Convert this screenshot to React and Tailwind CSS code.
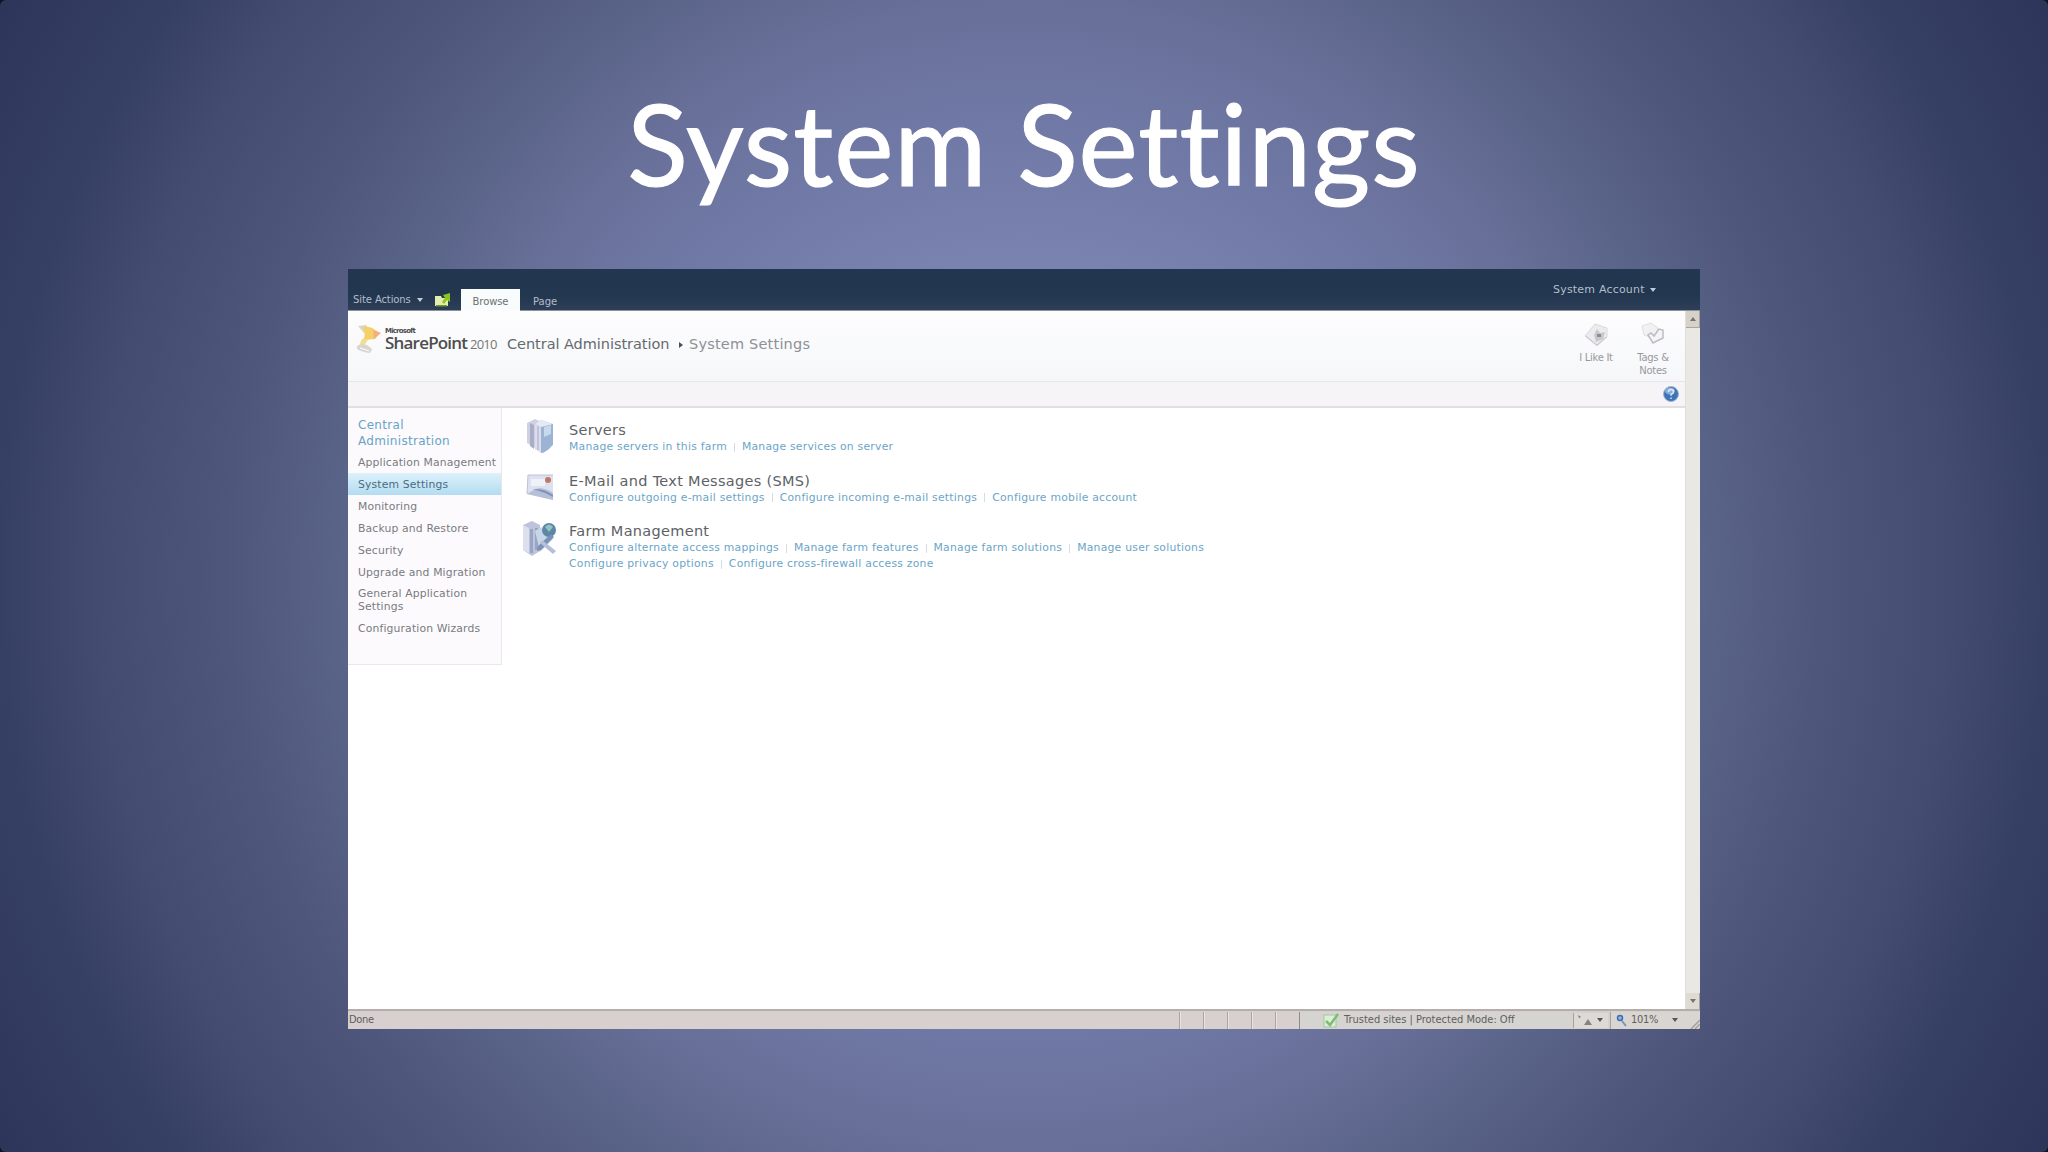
import clsx from 'clsx';

const NAV = [
  { label: 'Application Management' },
  { label: 'System Settings', active: true },
  { label: 'Monitoring' },
  { label: 'Backup and Restore' },
  { label: 'Security' },
  { label: 'Upgrade and Migration' },
  { label: 'General Application Settings', wrap: true },
  { label: 'Configuration Wizards' },
];

const SECTIONS = [
  {
    title: 'Servers',
    icon: ServersIcon,
    rows: [['Manage servers in this farm', 'Manage services on server']],
  },
  {
    title: 'E-Mail and Text Messages (SMS)',
    icon: MailIcon,
    rows: [['Configure outgoing e-mail settings', 'Configure incoming e-mail settings', 'Configure mobile account']],
  },
  {
    title: 'Farm Management',
    icon: FarmIcon,
    rows: [
      ['Configure alternate access mappings', 'Manage farm features', 'Manage farm solutions', 'Manage user solutions'],
      ['Configure privacy options', 'Configure cross-firewall access zone'],
    ],
  },
];

export default function App() {
  return (
    <div className="w-[2048px] bg-[#10131f]">
      <div className="w-[2048px] h-[1152px] overflow-hidden rounded-[6px] bg-[radial-gradient(circle_1175px_at_50%_50%,#7e87b6_0%,#7a82b0_27%,#6f77a4_40%,#687099_49%,#5a6388_58%,#4e577b_68%,#434c70_79%,#363f64_87%,#2d355a_100%)] font-['DejaVu_Sans',sans-serif]">
        <h1 className="h-[269px] pt-[76px] text-center font-['Lato',sans-serif] text-[112px] leading-[134px] tracking-[1px] text-white whitespace-nowrap [-webkit-text-stroke:1.2px_white]">
          System Settings
        </h1>
        <div className="mx-auto w-[1352px] h-[760px] flex flex-col bg-white overflow-hidden">
          <Ribbon />
          <div className="flex flex-1 min-h-0">
            <div className="flex-1 flex flex-col min-w-0">
              <Header />
              <div className="h-[26px] bg-[#f6f4f7] border-b-2 border-[#e2dfe2] flex items-center justify-end pr-[6px]">
                <HelpIcon />
              </div>
              <div className="flex flex-1">
                <Sidebar />
                <main className="pt-[13px] pl-[21px]">
                  {SECTIONS.map((s) => (
                    <Section key={s.title} {...s} />
                  ))}
                </main>
              </div>
            </div>
            <Scrollbar />
          </div>
          <StatusBar />
        </div>
      </div>
    </div>
  );
}

function Ribbon() {
  return (
    <div className="h-[42px] shrink-0 flex items-end bg-linear-to-b from-[#22364f] from-60% to-[#2d3f57] text-[#b3bdc9] text-[10px] leading-[14px] border-b border-[#8a929c]">
      <div className="w-[113px] h-[20px] pl-[5px] flex items-center">
        <span className="w-[64px] tracking-[-0.1px] whitespace-nowrap">Site Actions</span>
        <Caret />
        <svg viewBox="0 0 16 14" className="ml-[12px] w-4 h-3.5">
          <path d="M0 3h6l1 2h6v8H0z" fill="#e4ecb0" />
          <path d="M8 2l7-2v9l-3-2-3 4-2-2 3-4z" fill="#8cc51e" />
          <path d="M1 12h11v1.500H1z" fill="#6f9a26" />
        </svg>
      </div>
      <div className="w-[59px] h-[22px] -mb-px bg-[#f9fcfd] text-[#6c7172] text-center pt-[6px] tracking-[-0.1px]">Browse</div>
      <div className="h-[21px] pl-[13px] pt-[6px]">Page</div>
      <div className="ml-auto self-start mt-[14px] mr-[44px] flex items-center">
        <span className="w-[97px] text-[11px] tracking-[0.2px] whitespace-nowrap">System Account</span>
        <Caret />
      </div>
    </div>
  );
}

function Caret() {
  return (
    <svg viewBox="0 0 6 4" className="w-[6px] h-1">
      <path d="M0 0h6L3 4z" fill="#c3ccd6" />
    </svg>
  );
}

function Header() {
  return (
    <div className="h-[71px] flex bg-linear-to-b from-[#fdfdfe] to-[#f6f7f9] border-b border-[#e6e6e9]">
      <div className="flex h-[67px] pl-[7px]">
        <LogoMark />
        <div className="w-[124px] pl-[2px] pt-[17px] text-[#4e4d4d]">
          <div className="text-[7px] leading-[7px] font-bold tracking-[-0.8px]">Microsoft</div>
          <div className="flex items-baseline leading-[16px] font-['Open_Sans',sans-serif] whitespace-nowrap">
            <span className="text-[17px] font-semibold tracking-[-0.8px] w-[85px]">SharePoint</span>
            <span className="text-[13px] tracking-[-0.8px] text-[#777]">2010</span>
          </div>
        </div>
        <div className="flex items-center text-[14.500px] text-[#646a70] whitespace-nowrap">
          <span className="w-[172px] tracking-[-0.05px]">Central Administration</span>
          <svg viewBox="0 0 4 6" className="w-1 h-1.5 mr-[6px]">
            <path d="M0 0l4 3-4 3z" fill="#4a4f55" />
          </svg>
          <span className="text-[#8c9196] tracking-[0.2px]">System Settings</span>
        </div>
      </div>
      <div className="ml-auto flex pt-[10px] pr-[4px] text-[10px] leading-[13px] text-[#98989b] text-center tracking-[-0.3px]">
        <div className="w-[58px] flex flex-col items-center gap-[4px]">
          <svg viewBox="0 0 28 26" className="w-7 h-[26px]">
            <path d="M3 15L13 3l12 4v9L15 25z" fill="#ececee" stroke="#d9d9dc" />
            <path d="M12 14l3-6 3 4 5-1-2 7-7 3z" fill="#c8c8cc" />
            <path d="M15 13h4v3h-4z" fill="#8b8c91" />
            <path d="M4 15l11 9 9-8" fill="none" stroke="#c4c4c8" />
          </svg>
          I Like It
        </div>
        <div className="w-[56px] flex flex-col items-center gap-[4px]">
          <svg viewBox="0 0 28 26" className="w-7 h-[26px]">
            <path d="M3 5l9-3 7 5-4 10-10-3z" fill="#f1f1f3" stroke="#e0e0e3" />
            <path d="M9 14l5 8 10-5V9l-4-1-5 7-3-3z" fill="#f5f5f7" stroke="#bdbdc2" strokeWidth="1.500" />
          </svg>
          <span className="w-[40px]">Tags & Notes</span>
        </div>
      </div>
    </div>
  );
}

function Sidebar() {
  return (
    <nav className="w-[154px] h-[257px] pt-[9px] bg-[#fcfafd] border-r border-b border-[#ebe6ee] text-[10.800px] leading-[13px] tracking-[0.15px] text-[#7a7b80]">
      <div className="pl-[10px] mb-[2px] text-[12px] leading-[16px] tracking-[0.3px] text-[#68a4c8]">
        Central
        <br />
        Administration
      </div>
      {NAV.map(({ label, active, wrap }) => (
        <div
          key={label}
          className={clsx(
            'pl-[10px] flex items-center',
            wrap ? 'h-[34px] pr-[24px]' : 'h-[22px] whitespace-nowrap',
            active && 'bg-linear-to-b from-[#dcf1fb] to-[#b3dcf1] text-[#4a6c80]'
          )}
        >
          {label}
        </div>
      ))}
    </nav>
  );
}

function Section({ title, icon: Icon, rows }) {
  return (
    <section className="flex min-h-[50.500px] whitespace-nowrap">
      <div className="w-[46px] shrink-0">
        <Icon />
      </div>
      <div>
        <h2 className="text-[14.500px] leading-[18px] tracking-[0.3px] text-[#5d6266]">{title}</h2>
        {rows.map((row) => (
          <div key={row[0]} className="flex items-center text-[10.800px] tracking-[0.25px] leading-[16px] text-[#6ba5c8]">
            {row.map((link, i) => (
              <span key={link} className="flex items-center">
                {i > 0 && <span className="w-px h-[9px] bg-[#d3dde3] mx-[7px]" />}
                {link}
              </span>
            ))}
          </div>
        ))}
      </div>
    </section>
  );
}

function Scrollbar() {
  return (
    <div className="w-[15px] flex flex-col justify-between bg-[#eae8e5] border-l border-[#e2ded8]">
      <div className="h-[17px] bg-[#d6d2ca] border-b border-r border-[#aaa69e] flex items-center justify-center">
        <svg viewBox="0 0 6 4" className="w-1.5 h-1">
          <path d="M0 4h6L3 0z" fill="#77746e" />
        </svg>
      </div>
      <div className="h-[16px] bg-[#dedad4] border-r border-[#aaa69e] flex items-center justify-center">
        <svg viewBox="0 0 6 4" className="w-1.5 h-1">
          <path d="M0 0h6L3 4z" fill="#77746e" />
        </svg>
      </div>
    </div>
  );
}

function StatusBar() {
  return (
    <div className="h-[20px] shrink-0 flex items-center bg-[#d8d0ce] border-t-2 border-[#b3aeab] font-['DejaVu_Sans_Condensed','DejaVu_Sans',sans-serif] text-[11px] text-[#625d5d] whitespace-nowrap">
      <span className="w-[831px] pl-px pt-px tracking-[-0.3px]">Done</span>
      {[0, 1, 2, 3, 4].map((n) => (
        <span key={n} className="w-[24px] h-[17px] border-l border-[#aaa5a0] shadow-[inset_1px_0_0_#e9e5e2]" />
      ))}
      <span className="w-[274px] h-[17px] pl-[23px] border-l border-[#8f8b87] bg-[#d5d4d1] flex items-center">
        <svg viewBox="0 0 16 15" className="w-4 h-[15px] mr-[5px]">
          <rect x="1" y="2" width="12" height="12" fill="#dbeed8" stroke="#a5c8a0" />
          <path d="M3 8l4 4 8-11" fill="none" stroke="#7fbd77" strokeWidth="2.500" />
        </svg>
        <span className="pt-px">Trusted sites | Protected Mode: Off</span>
      </span>
      <span className="w-[35px] h-[15px] pl-[4px] bg-[#dddad6] border-l border-[#a5a19d] flex items-center gap-[3px]">
        <svg viewBox="0 0 16 12" className="w-4 h-3">
          <path d="M0 1l3 2-2 1z" fill="#77746e" />
          <path d="M6 11l4-6 4 6z" fill="#85837f" />
        </svg>
        <svg viewBox="0 0 6 4" className="w-1.5 h-1">
          <path d="M0 0h6L3 4z" fill="#5a5555" />
        </svg>
      </span>
      <span className="flex-1 h-[17px] pl-[5px] ml-[2px] bg-[#d9d5d1] border-l border-[#a5a19d] flex items-center">
        <svg viewBox="0 0 12 13" className="w-3 h-[13px] mr-[3px]">
          <circle cx="4" cy="4" r="2.500" fill="#8fb8e6" stroke="#3d6fb5" strokeWidth="1.500" />
          <path d="M6 7l4 5" stroke="#7894b8" strokeWidth="2" />
        </svg>
        <span className="w-[41px] pt-px tracking-[-0.3px]">101%</span>
        <svg viewBox="0 0 6 4" className="w-1.5 h-1">
          <path d="M0 0h6L3 4z" fill="#5a5555" />
        </svg>
        <svg viewBox="0 0 10 10" className="ml-auto self-end w-2.5 h-2.5">
          <path d="M1 10l9-9M5 10l5-5M9 10l1-1" stroke="#a39f9a" strokeWidth="1.500" />
        </svg>
      </span>
    </div>
  );
}

function HelpIcon() {
  return (
    <svg viewBox="0 0 16 16" className="w-4 h-4">
      <circle cx="8" cy="8" r="7.500" fill="#3f74b5" stroke="#9db6d6" />
      <ellipse cx="7" cy="5" rx="5" ry="3.500" fill="#86afdc" />
      <path d="M5.500 6Q5.500 3.500 8 3.500T10.500 6Q10.500 7.300 8 8.500v1.200M8 11.500v1.500" fill="none" stroke="#dfeaf6" strokeWidth="1.400" />
    </svg>
  );
}

function LogoMark() {
  return (
    <svg viewBox="0 0 28 30" className="mt-[13px] w-7 h-[30px]">
      <path d="M3 2l8-1 4 5-6 3z" fill="#d8d6cf" />
      <path d="M7 3q9-1 13 3l5 3-5 6-12 1q4-7-1-13z" fill="#f6d066" />
      <path d="M18 6l8 3-7 6z" fill="#f4b07c" />
      <path d="M7 15l6 1-5 7-5 1z" fill="#f3dc93" />
      <path d="M2 22q5-3 10-1l5 4-2 4q-8-1-13-4z" fill="#d8d6d1" />
      <path d="M5 24l9 3" stroke="#fff" />
    </svg>
  );
}

function ServersIcon() {
  return (
    <svg viewBox="0 0 28 34" className="mt-[-2px] ml-[4px] w-7 h-[34px]">
      <path d="M0 4l8-4 6 3v25l-6 1-8-5z" fill="#ced1e1" />
      <path d="M3 4l4 2v24l-4-3z" fill="#a9aec8" />
      <path d="M8 5l6-4 12 4v21l-10 8-8-4z" fill="#a9bbd9" />
      <path d="M8 5l6 3v26l-6-4z" fill="#d9dded" />
      <path d="M11 7v24" stroke="#a5acc8" />
      <path d="M14 8l12-3v20q-5 8-12 9z" fill="#9db3d4" />
      <path d="M17 8l7-2v9l-7 3z" fill="#c6daee" />
      <path d="M8 5l6-4 12 4-12 3z" fill="#e6eaf4" />
    </svg>
  );
}

function MailIcon() {
  return (
    <svg viewBox="0 0 28 27" className="mt-[2px] ml-[3px] w-7 h-[27px]">
      <path d="M2 1h25v25L1 20z" fill="#dde0ee" />
      <path d="M2 1h25M2 1L1 20" stroke="#bcc1d8" fill="none" />
      <path d="M5 5h14v7H5z" fill="#f0f2f9" />
      <path d="M1 20q9-6 13-6 8 1 13 5v7z" fill="#b5bfd8" />
      <path d="M7 15q11-1 20 6v2q-9-5-20-8z" fill="#7f93b9" />
      <circle cx="22" cy="6" r="3" fill="#bf7868" />
    </svg>
  );
}

function FarmIcon() {
  return (
    <svg viewBox="0 0 34 36" className="-mt-px w-[34px] h-9">
      <path d="M0 4l9-4 8 4v26l-8 5-9-6z" fill="#bcc3da" />
      <path d="M0 4l6 3v25l-6-3z" fill="#dcdfed" />
      <path d="M7 8h3v24H7zM12 7h3v22h-3z" fill="#98a5c4" />
      <path d="M12 10l6-4 12 12-13 13z" fill="#c9d6e8" />
      <circle cx="26" cy="9" r="7" fill="#5c87a6" />
      <path d="M22 6q4-5 8 0l-4 5z" fill="#92c3bd" />
      <path d="M28 13l3 3-13 13-4 1 1-5z" fill="#7992b6" />
      <path d="M19 19l14 11-3 3-13-11z" fill="#b3c0d7" />
    </svg>
  );
}
